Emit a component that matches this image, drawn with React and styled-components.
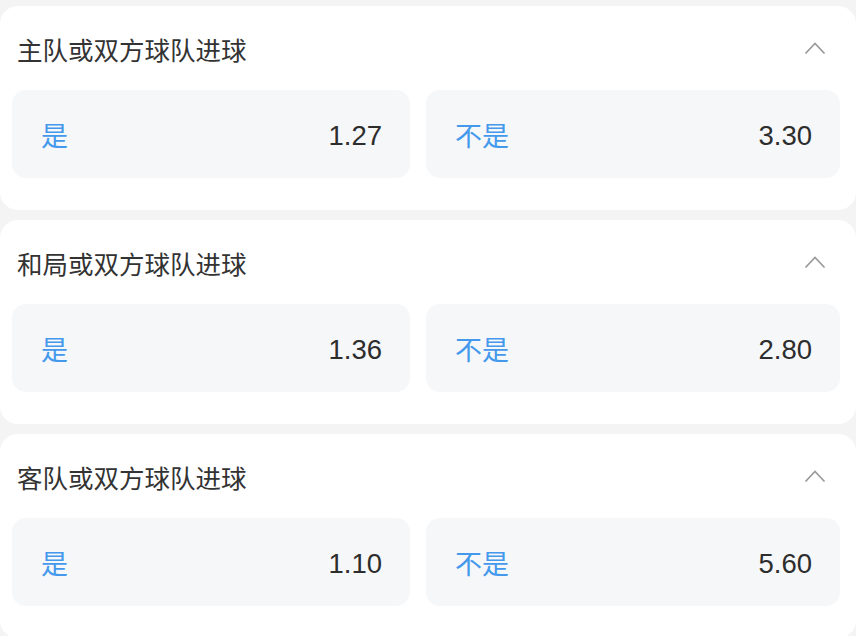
import React from "react";
import styled, { createGlobalStyle } from "styled-components";

const GlobalStyle = createGlobalStyle`
  html, body {
    margin: 0;
    padding: 0;
    background: #f4f4f4;
    font-family: "Liberation Sans", "Noto Sans CJK SC", sans-serif;
  }
`;

const Page = styled.div`
  display: flex;
  flex-direction: column;
  gap: 10px;
  padding-top: 6px;
`;

const Card = styled.section`
  background: #ffffff;
  border-radius: 18px;
  padding: 0 16px 32px 12px;
`;

const Header = styled.div`
  display: flex;
  align-items: center;
  justify-content: space-between;
  height: 84px;
  padding: 4px 14px 4px 5px;
  box-sizing: border-box;
`;

const Title = styled.h3`
  margin: 0;
  font-size: 25.5px;
  font-weight: 400;
  color: #333333;
  font-family: "Noto Sans CJK SC", sans-serif;
`;

const Options = styled.div`
  display: grid;
  grid-template-columns: 398px 1fr;
  gap: 16px;
`;

const Option = styled.div`
  display: flex;
  align-items: center;
  justify-content: space-between;
  height: 88px;
  padding: 0 28px 0 29px;
  background: #f6f7f9;
  border-radius: 14px;
`;

const Label = styled.span`
  font-size: 27px;
  color: #4499ec;
  font-family: "Noto Sans CJK SC", sans-serif;
`;

const Odds = styled.span`
  font-size: 27.5px;
  color: #2d2d2d;
  font-family: "Liberation Sans", Arial, sans-serif;
  padding-top: 3px;
`;

const Chevron = () => (
  <svg width="22" height="14" viewBox="0 0 22 14" fill="none">
    <path d="M1.5 12.5 L11 2.5 L20.5 12.5" stroke="#999999" strokeWidth="1.7" />
  </svg>
);

const markets = [
  { title: "主队或双方球队进球", yes: "1.27", no: "3.30" },
  { title: "和局或双方球队进球", yes: "1.36", no: "2.80" },
  { title: "客队或双方球队进球", yes: "1.10", no: "5.60" },
];

export default function App() {
  return (
    <>
      <GlobalStyle />
      <Page>
        {markets.map((m) => (
          <Card key={m.title}>
            <Header>
              <Title>{m.title}</Title>
              <Chevron />
            </Header>
            <Options>
              <Option>
                <Label>是</Label>
                <Odds>{m.yes}</Odds>
              </Option>
              <Option>
                <Label>不是</Label>
                <Odds>{m.no}</Odds>
              </Option>
            </Options>
          </Card>
        ))}
      </Page>
    </>
  );
}
